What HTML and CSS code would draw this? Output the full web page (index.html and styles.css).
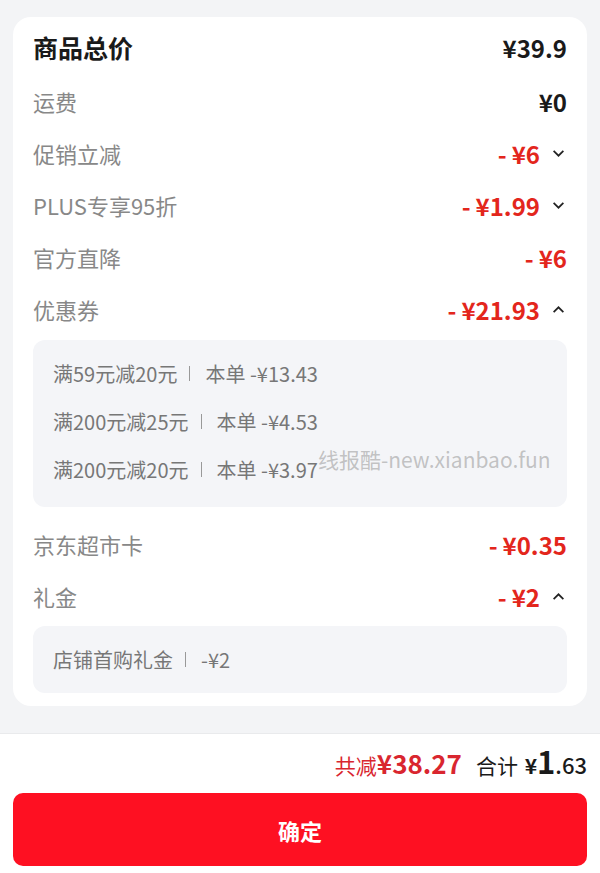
FILE: index.html
```html
<!DOCTYPE html>
<html lang="zh-CN">
<head>
    <meta charset="UTF-8">
    <meta name="viewport" content="width=device-width, initial-scale=1.0">
    <title>价格明细</title>
    <link rel="stylesheet" href="styles.css">
</head>
<body>
    <div class="page">
        <div class="card">
            <div class="row row-head">
                <span class="label">商品总价</span>
                <span class="value">¥39.9</span>
            </div>
            <div class="row">
                <span class="label">运费</span>
                <span class="value">¥0</span>
            </div>
            <div class="row">
                <span class="label">促销立减</span>
                <span class="value red"><i class="minus">-</i>¥6<svg class="chev" viewBox="0 0 12 8"><path d="M1.5 1.5 L6 6 L10.5 1.5"/></svg></span>
            </div>
            <div class="row">
                <span class="label">PLUS专享95折</span>
                <span class="value red"><i class="minus">-</i>¥1.99<svg class="chev" viewBox="0 0 12 8"><path d="M1.5 1.5 L6 6 L10.5 1.5"/></svg></span>
            </div>
            <div class="row">
                <span class="label">官方直降</span>
                <span class="value red"><i class="minus">-</i>¥6</span>
            </div>
            <div class="row">
                <span class="label">优惠券</span>
                <span class="value red"><i class="minus">-</i>¥21.93<svg class="chev" viewBox="0 0 12 8"><path d="M1.5 6.5 L6 2 L10.5 6.5"/></svg></span>
            </div>
            <div class="detail">
                <div class="line">满59元减20元<b class="sep"></b>本单 -¥13.43</div>
                <div class="line">满200元减25元<b class="sep"></b>本单 -¥4.53</div>
                <div class="line">满200元减20元<b class="sep"></b>本单 -¥3.97</div>
            </div>
            <div class="row row-after">
                <span class="label">京东超市卡</span>
                <span class="value red"><i class="minus">-</i>¥0.35</span>
            </div>
            <div class="row">
                <span class="label">礼金</span>
                <span class="value red"><i class="minus">-</i>¥2<svg class="chev" viewBox="0 0 12 8"><path d="M1.5 6.5 L6 2 L10.5 6.5"/></svg></span>
            </div>
            <div class="detail detail-small">
                <div class="line">店铺首购礼金<b class="sep"></b>-¥2</div>
            </div>
        </div>

        <div class="footer">
            <div class="total">
                <span class="saved">共减<b>¥38.27</b></span>
                <span class="sum">合计 <b class="yen">¥</b><b class="big">1</b><b class="cents">.63</b></span>
            </div>
            <button class="confirm">确定</button>
        </div>

        <div class="watermark">线报酷-new.xianbao.fun</div>
    </div>
</body>
</html>
```

FILE: styles.css
```css
/* Base */
body {
    margin: 0;
    background: #f3f4f6;
    font-family: "Noto Sans CJK SC", "Noto Sans", sans-serif;
    color: #1a1a1a;
}

.page {
    position: relative;
    width: 600px;
    height: 873px;
    overflow: hidden;
    padding-top: 17px;
    box-sizing: border-box;
}

/* Price card */
.card {
    margin: 0 13px;
    padding: 2px 20px 13px;
    background: #fff;
    border-radius: 18px;
}

.row {
    display: flex;
    justify-content: space-between;
    align-items: center;
    height: 52px;
}

.row-head {
    height: 56px;
}

.row-after {
    margin-top: 11px;
}

.label {
    font-size: 22px;
    color: #888;
}

.row-head .label {
    font-size: 25px;
    font-weight: 700;
    color: #1a1a1a;
}

.value {
    display: flex;
    align-items: center;
    font-size: 24px;
    font-weight: 700;
    color: #1a1a1a;
}

.value.red {
    color: #e3261c;
}

.minus {
    font-style: normal;
    margin-right: 5px;
}

.chev {
    width: 13px;
    height: 9px;
    margin-left: 12px;
    margin-right: 2px;
    fill: none;
    stroke: #222;
    stroke-width: 1.6;
}

/* Expanded details */
.detail {
    margin-top: 5px;
    padding: 9px 20px 14px;
    background: #f4f5f8;
    border-radius: 12px;
}

.detail-small {
    margin-top: 4px;
    padding: 9px 20px 10px;
}

.line {
    display: flex;
    align-items: center;
    height: 48px;
    font-size: 20px;
    color: #777;
}

.sep {
    width: 1px;
    height: 15px;
    margin: 0 15px 0 12px;
    background: #999;
}

/* Bottom bar */
.footer {
    margin-top: 27px;
    padding: 7px 13px 0;
    background: #fff;
    border-top: 1px solid #e9eaec;
    height: 200px;
}

.total {
    display: flex;
    justify-content: flex-end;
    align-items: baseline;
    height: 40px;
    line-height: 40px;
}

.saved {
    font-size: 21px;
    color: #d9262f;
}

.saved b {
    font-size: 26px;
    font-weight: 700;
}

.sum {
    margin-left: 14px;
    font-size: 21px;
    color: #1a1a1a;
}

.sum .yen {
    font-size: 21px;
    margin-left: 2px;
}

.sum .big {
    font-size: 31px;
    font-weight: 700;
}

.sum .cents {
    font-size: 22px;
    font-weight: 500;
}

.confirm {
    display: block;
    width: 100%;
    height: 73px;
    margin-top: 12px;
    border: none;
    border-radius: 10px;
    background: #fe1022;
    color: #fff;
    font-family: inherit;
    font-size: 22px;
    font-weight: 700;
}

/* Screenshot watermark */
.watermark {
    position: absolute;
    left: 318px;
    top: 444px;
    font-size: 21px;
    color: rgba(150, 150, 150, 0.55);
    font-family: "Noto Sans CJK SC", "Noto Sans", sans-serif;
}
```
